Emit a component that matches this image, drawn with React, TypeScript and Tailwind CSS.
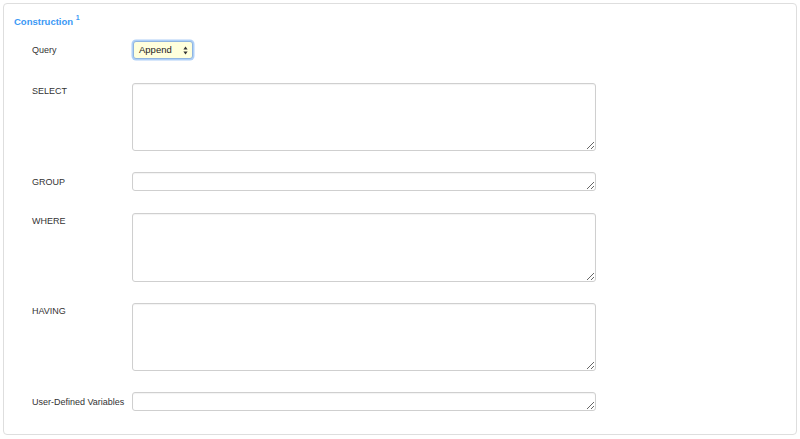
import React from "react";

const font = { fontFamily: '"Liberation Sans", Arial, Helvetica, sans-serif' };

function Label({ children, center }: { children: React.ReactNode; center?: boolean }) {
  return (
    <div
      className={`w-[100px] shrink-0 text-[9px] leading-[14px] text-[#333333] ${center ? "self-center" : "pt-[1px]"}`}
    >
      {children}
    </div>
  );
}

function Area({ h }: { h: string }) {
  return (
    <textarea
      className={`block w-[464px] ${h} rounded-[3px] border border-[#cfcfcf] bg-white outline-none shadow-[inset_0_1px_1px_rgba(0,0,0,0.05)] overflow-hidden`}
    />
  );
}

export default function App() {
  return (
    <div className="w-[800px] h-[439px] bg-white p-[3px]" style={font}>
      <div className="rounded-[4px] border border-[#dedede] pt-[12px] pb-[23px]">
        <div className="pl-[10px] text-[9.5px] leading-[12px] font-bold text-[#3b99f5]">
          Construction <sup className="text-[7px] align-super relative top-[-1px]">1</sup>
        </div>
        <div className="pl-[28px] flex flex-col">
          <div className="flex items-center mt-[13px]">
            <Label center>Query</Label>
            <div className="ml-px w-[60px] h-[18px] rounded-[3px] border border-[#8fb4e0] bg-[#ffffdc] shadow-[0_0_0_1.5px_rgba(110,170,240,0.55)] flex items-center justify-between pl-[5px] pr-[4px]">
              <span className="text-[9.5px] leading-none text-[#222]">Append</span>
              <svg width="5" height="9" viewBox="0 0 5 9">
                <path d="M2.5 0.5 L4.6 3.6 L0.4 3.6 Z" fill="#333" />
                <path d="M2.5 8.5 L4.6 5.4 L0.4 5.4 Z" fill="#333" />
              </svg>
            </div>
          </div>
          <div className="flex items-start mt-[24px]">
            <Label>SELECT</Label>
            <Area h="h-[68px]" />
          </div>
          <div className="flex items-start mt-[21px]">
            <Label center>GROUP</Label>
            <Area h="h-[19px]" />
          </div>
          <div className="flex items-start mt-[22px]">
            <Label>WHERE</Label>
            <Area h="h-[69px]" />
          </div>
          <div className="flex items-start mt-[21px]">
            <Label>HAVING</Label>
            <Area h="h-[68px]" />
          </div>
          <div className="flex items-start mt-[21px]">
            <Label center>User-Defined Variables</Label>
            <Area h="h-[19px]" />
          </div>
        </div>
      </div>
    </div>
  );
}
